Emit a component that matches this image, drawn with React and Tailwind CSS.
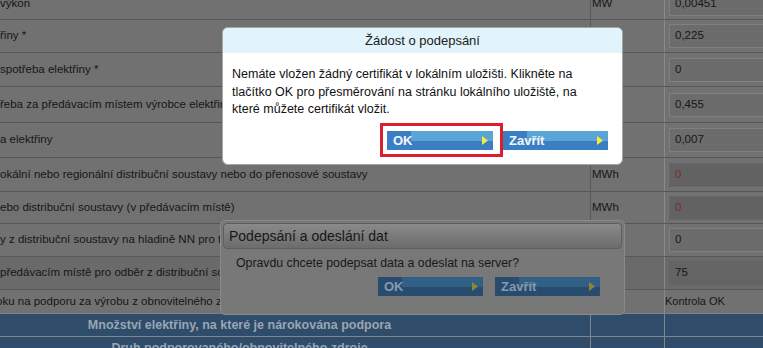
const rows = [
  { label: "výkon", unit: "MW", value: "0,00451", h: 31 },
  { label: "řiny *", unit: "", value: "0,225", h: 33 },
  { label: "spotřeba elektřiny *", unit: "", value: "0", h: 34 },
  { label: "řeba za předávacím místem výrobce elektřiny", unit: "", value: "0,455", h: 36 },
  { label: "a elektřiny", unit: "", value: "0,007", h: 35 },
  { label: "okální nebo regionální distribuční soustavy nebo do přenosové soustavy", unit: "MWh", value: "0", h: 34, locked: true },
  { label: "ebo distribuční soustavy (v předávacím místě)", unit: "MWh", value: "0", h: 32, locked: true },
  { label: "y z distribuční soustavy na hladině NN pro technologickou vlastní spotřebu", unit: "", value: "0", h: 33 },
  { label: "předávacím místě pro odběr z distribuční soustavy", unit: "", value: "75", h: 33, dark: true, plain: true },
];

function Arrow({ dim }) {
  return (
    <svg width="6" height="9" viewBox="0 0 6 9" className="shrink-0">
      <path d="M0 0 L6 4.5 L0 9 Z" fill={dim ? "#8a8a2c" : "#f2ef3a"} />
    </svg>
  );
}

function BlueButton({ label, dim, w }) {
  return (
    <button
      type="button"
      className={`relative flex items-center justify-between h-[19px] pl-[6px] pr-[5px] overflow-hidden ${w} ${
        dim ? "bg-[#284b70]" : "bg-[#3c7ec4]"
      }`}
    >
      <span
        className={`absolute left-[24px] right-0 top-0 h-[10px] ${dim ? "bg-[#325f86]" : "bg-[#5aa4d6]"}`}
      ></span>
      <span
        className={`relative font-bold text-[13px] leading-none ${dim ? "text-[#8799ad]" : "text-[#f3f7fb]"}`}
      >
        {label}
      </span>
      <span className="relative">
        <Arrow dim={dim} />
      </span>
    </button>
  );
}

export default function App() {
  return (
    <div
      className="relative w-[763px] h-[348px] overflow-hidden bg-[#717171] text-[#161616]"
      style={{ fontFamily: '"Liberation Sans", Arial, sans-serif' }}
    >
      <div className="-mt-[11px]">
        {rows.map((r, i) => (
          <div
            key={i}
            className={`flex border-b border-[#575757] ${r.dark ? "bg-[#6a6a6a]" : ""}`}
            style={{ height: r.h }}
          >
            <div className="w-[591px] shrink-0 flex items-center overflow-hidden whitespace-nowrap border-r border-[#595959] text-[11.5px]">
              {r.label}
            </div>
            <div className="w-[74px] shrink-0 flex items-center pl-[1px] border-r border-[#8a8a8a] text-[11.5px]">
              {r.unit}
            </div>
            <div className="flex-1 flex items-center pl-[4px]">
              <div
                className={`w-[120px] h-[24px] flex items-center pl-[5px] text-[11.5px] border ${
                  r.locked
                    ? "bg-[#626262] border-[#666666] text-[#7d2a2a]"
                    : r.plain
                    ? "bg-[#646464] border-[#646464]"
                    : "bg-[#6c6c6c] border-[#808080]"
                }`}
              >
                {r.value}
              </div>
            </div>
          </div>
        ))}
        <div className="flex h-[24px] border-b border-[#7c8088]">
          <div className="w-[591px] shrink-0 flex items-center overflow-hidden whitespace-nowrap border-r border-[#595959] text-[11.5px]">
            <span className="-ml-[4px]">oku na podporu za výrobu z obnovitelného zdroje energie</span>
          </div>
          <div className="w-[74px] shrink-0 border-r border-[#8a8a8a]"></div>
          <div className="flex-1 flex items-center text-[11px]">Kontrola OK</div>
        </div>
        <div className="flex h-[23px] bg-[#2f4c6a] border-b border-[#7d8590]">
          <div className="w-[591px] shrink-0 flex items-center justify-center pr-[111px] border-r border-[#7d8590] font-bold text-[12.5px] text-[#9aa6b2] whitespace-nowrap">
            Množství elektřiny, na které je nárokována podpora
          </div>
          <div className="w-[74px] shrink-0 border-r border-[#7d8590]"></div>
          <div className="flex-1"></div>
        </div>
        <div className="flex h-[23px] bg-[#2f4c6a]">
          <div className="w-[591px] shrink-0 flex items-center justify-center pr-[111px] border-r border-[#7d8590] font-bold text-[12.5px] text-[#9aa6b2] whitespace-nowrap">
            Druh podporovaného/obnovitelného zdroje
          </div>
          <div className="w-[74px] shrink-0 border-r border-[#7d8590]"></div>
          <div className="flex-1"></div>
        </div>
      </div>

      {/* dimmed confirmation dialog */}
      <div className="absolute left-[220px] top-[220px] w-[405px] h-[95px] p-[2px] rounded-[5px] bg-[#787878] border border-[#8a8a8a]">
        <div className="h-[26px] flex items-center pl-[5px] rounded-[4px] border border-[#5e5e5e] bg-gradient-to-b from-[#8a8a8a] to-[#6c6c6c] text-[14px] text-[#181818]">
          Podepsání a odeslání dat
        </div>
        <div className="pl-[13px] pt-[6px] text-[12.3px] leading-[16px] text-[#181818]">
          Opravdu chcete podepsat data a odeslat na server?
        </div>
        <div className="flex justify-end gap-[12px] pr-[22px] pt-[6px]">
          <BlueButton label="OK" dim w="w-[105px]" />
          <BlueButton label="Zavřít" dim w="w-[105px]" />
        </div>
      </div>

      {/* active dialog */}
      <div className="absolute left-[222px] top-[27px] w-[401px] h-[138px] rounded-[6px] overflow-hidden bg-white border border-[#a5a5a5]">
        <div className="h-[25px] flex items-center justify-center bg-[#e1f3fb] text-[13px] text-[#202020]">
          Žádost o podepsání
        </div>
        <div className="pl-[9px] pr-[36px] pt-[13px] text-[12.5px] leading-[17.5px] text-[#111111]">
          Nemáte vložen žádný certifikát v lokálním uložišti. Klikněte na tlačítko OK pro přesměrování na stránku
          lokálního uložiště, na které můžete certifikát vložit.
        </div>
        <div className="flex justify-end gap-[10px] pr-[14px] pt-[12px]">
          <BlueButton label="OK" w="w-[106px]" />
          <BlueButton label="Zavřít" w="w-[105px]" />
        </div>
      </div>

      {/* red highlight drawn over the OK button */}
      <div className="absolute left-[380px] top-[123px] w-[123px] h-[34px] border-[3px] border-[#dc1f2e]"></div>
    </div>
  );
}
